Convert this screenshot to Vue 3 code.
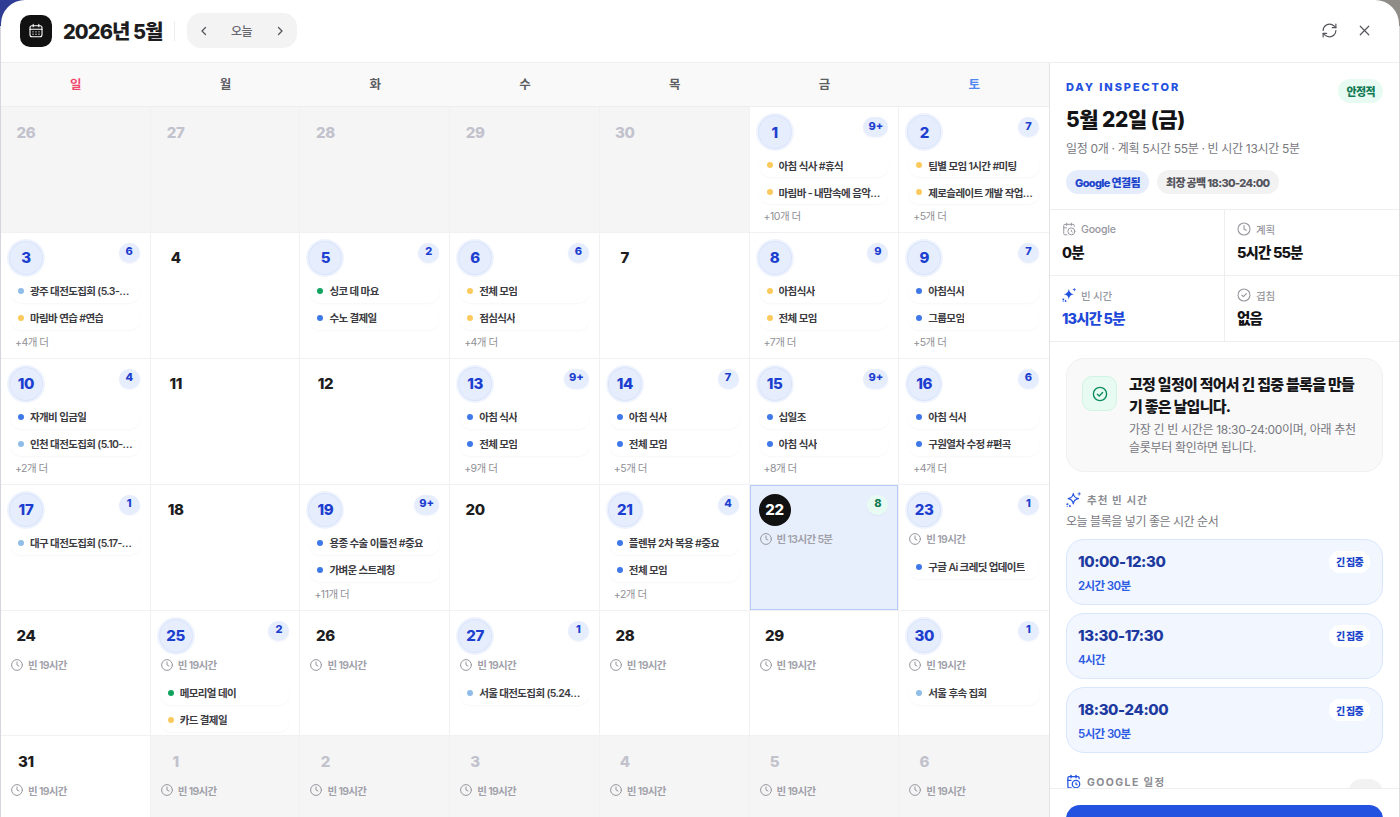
<script setup>
const Y = 'yellow', B = 'blue', L = 'light', G = 'green'
const e = (text, color) => ({ text, color })
const cells = [
  { d: 26, muted: 1 }, { d: 27, muted: 1 }, { d: 28, muted: 1 }, { d: 29, muted: 1 }, { d: 30, muted: 1 },
  { d: 1, c: '9+', ev: [e('아침 식사 #휴식', Y), e('마림바 - 내맘속에 음악회 연습', Y)], more: 10 },
  { d: 2, c: '7', ev: [e('팀별 모임 1시간 #미팅', Y), e('제로슬레이트 개발 작업 정리', Y)], more: 5 },
  { d: 3, c: '6', ev: [e('광주 대전도집회 (5.3-5.4)', L), e('마림바 연습 #연습', Y)], more: 4 },
  { d: 4 },
  { d: 5, c: '2', ev: [e('싱코 데 마요', G), e('수노 결제일', B)] },
  { d: 6, c: '6', ev: [e('전체 모임', Y), e('점심식사', Y)], more: 4 },
  { d: 7 },
  { d: 8, c: '9', ev: [e('아침식사', Y), e('전체 모임', Y)], more: 7 },
  { d: 9, c: '7', ev: [e('아침식사', B), e('그룹모임', B)], more: 5 },
  { d: 10, c: '4', ev: [e('자개비 입금일', B), e('인천 대전도집회 (5.10-5.11)', L)], more: 2 },
  { d: 11 }, { d: 12 },
  { d: 13, c: '9+', ev: [e('아침 식사', B), e('전체 모임', B)], more: 9 },
  { d: 14, c: '7', ev: [e('아침 식사', B), e('전체 모임', B)], more: 5 },
  { d: 15, c: '9+', ev: [e('십일조', B), e('아침 식사', B)], more: 8 },
  { d: 16, c: '6', ev: [e('아침 식사', B), e('구원열차 수정 #편곡', B)], more: 4 },
  { d: 17, c: '1', ev: [e('대구 대전도집회 (5.17-5.18)', L)] },
  { d: 18 },
  { d: 19, c: '9+', ev: [e('용종 수술 이틀전 #중요', B), e('가벼운 스트레칭', B)], more: 11 },
  { d: 20 },
  { d: 21, c: '4', ev: [e('플렌뷰 2차 복용 #중요', B), e('전체 모임', B)], more: 2 },
  { d: 22, c: '8', sel: 1, free: '빈 13시간 5분' },
  { d: 23, c: '1', free: '빈 19시간', ev: [e('구글 Ai 크레딧 업데이트', B)] },
  { d: 24, free: '빈 19시간' },
  { d: 25, c: '2', free: '빈 19시간', ev: [e('메모리얼 데이', G), e('카드 결제일', Y)] },
  { d: 26, free: '빈 19시간' },
  { d: 27, c: '1', free: '빈 19시간', ev: [e('서울 대전도집회 (5.24-5.25)', L)] },
  { d: 28, free: '빈 19시간' },
  { d: 29, free: '빈 19시간' },
  { d: 30, c: '1', free: '빈 19시간', ev: [e('서울 후속 집회', L)] },
  { d: 31, free: '빈 19시간' },
  ...[1, 2, 3, 4, 5, 6].map((d) => ({ d, muted: 1, free: '빈 19시간' }))
]
const weekdays = ['일', '월', '화', '수', '목', '금', '토']
const slots = [
  { t: '10:00-12:30', s: '2시간 30분' },
  { t: '13:30-17:30', s: '4시간' },
  { t: '18:30-24:00', s: '5시간 30분' }
]
</script>

<template>
  <div class="page">
    <div class="modal">
      <header class="top">
        <div class="logo">
          <svg width="16" height="16" viewBox="0 0 16 16" fill="none" stroke="#fff" stroke-width="1.1" stroke-linecap="round">
            <rect x="2" y="2.8" width="12" height="11" rx="2" />
            <path d="M2 6.2h12M5.2 1.4v2.4M10.8 1.4v2.4" />
            <path d="M5 8.8h.01M8 8.8h.01M11 8.8h.01M5 11.2h.01M8 11.2h.01M11 11.2h.01" stroke-width="1.3" />
          </svg>
        </div>
        <h1 class="title">2026년 5월</h1>
        <span class="divider"></span>
        <div class="nav">
          <svg width="14" height="14" viewBox="0 0 14 14" fill="none" stroke="#55555c" stroke-width="1.3" stroke-linecap="round" stroke-linejoin="round"><path d="M8.5 3.5 5 7l3.5 3.5" /></svg>
          <span class="today">오늘</span>
          <svg width="14" height="14" viewBox="0 0 14 14" fill="none" stroke="#55555c" stroke-width="1.3" stroke-linecap="round" stroke-linejoin="round"><path d="M5.5 3.5 9 7l-3.5 3.5" /></svg>
        </div>
        <div class="top-actions">
          <svg width="17" height="17" viewBox="0 0 24 24" fill="none" stroke="#55555c" stroke-width="1.7" stroke-linecap="round" stroke-linejoin="round">
            <path d="M3 12a9 9 0 0 1 9-9 9.75 9.75 0 0 1 6.74 2.74L21 8" /><path d="M21 3v5h-5" />
            <path d="M21 12a9 9 0 0 1-9 9 9.75 9.75 0 0 1-6.74-2.74L3 16" /><path d="M8 16H3v5" />
          </svg>
          <svg width="17" height="17" viewBox="0 0 24 24" fill="none" stroke="#55555c" stroke-width="1.7" stroke-linecap="round"><path d="M6 6l12 12M18 6 6 18" /></svg>
        </div>
      </header>

      <div class="body">
        <section class="calendar">
          <div class="weekdays">
            <div v-for="(w, i) in weekdays" :key="w" class="wd" :class="{ sun: i === 0, sat: i === 6 }">{{ w }}</div>
          </div>
          <div class="grid">
            <div v-for="(c, i) in cells" :key="i" class="cell" :class="{ muted: c.muted, sel: c.sel }">
              <div class="head">
                <span class="num" :class="{ has: c.c && !c.sel, black: c.sel }">{{ c.d }}</span>
                <span v-if="c.c" class="badge" :class="{ ok: c.sel }">{{ c.c }}</span>
              </div>
              <div v-if="c.free" class="free">
                <svg width="12" height="12" viewBox="0 0 12 12" fill="none" stroke="#97979f" stroke-width="1" stroke-linecap="round" stroke-linejoin="round">
                  <circle cx="6" cy="6" r="5.4" /><path d="M6 3v3l2 1" />
                </svg>
                <span>{{ c.free }}</span>
              </div>
              <div v-if="c.ev" class="events" :class="{ under: c.free }">
                <div v-for="x in c.ev" :key="x.text" class="ev">
                  <i class="dot" :class="x.color"></i>
                  <span class="ev-text">{{ x.text }}</span>
                </div>
              </div>
              <div v-if="c.more" class="more">+{{ c.more }}개 더</div>
            </div>
          </div>
        </section>

        <aside class="panel">
          <div class="panel-scroll">
            <div class="insp">
              <div class="insp-top">
                <span class="eyebrow">DAY INSPECTOR</span>
                <span class="stable">안정적</span>
              </div>
              <h2 class="insp-title">5월 22일 (금)</h2>
              <p class="insp-sub">일정 0개 · 계획 5시간 55분 · 빈 시간 13시간 5분</p>
              <div class="chips">
                <span class="chip blue-chip">Google 연결됨</span>
                <span class="chip grey-chip">최장 공백 18:30-24:00</span>
              </div>
            </div>

            <div class="stats">
              <div class="stat">
                <div class="stat-label">
                  <svg width="14" height="14" viewBox="0 0 24 24" fill="none" stroke="#97979f" stroke-width="1.7" stroke-linecap="round" stroke-linejoin="round">
                    <path d="M16 14v2.2l1.6 1" /><path d="M16 2v4" /><path d="M21 7.5V6a2 2 0 0 0-2-2H5a2 2 0 0 0-2 2v14a2 2 0 0 0 2 2h3.5" /><path d="M3 10h5" /><path d="M8 2v4" /><circle cx="16" cy="16" r="6" />
                  </svg>
                  Google
                </div>
                <div class="stat-val">0분</div>
              </div>
              <div class="stat">
                <div class="stat-label">
                  <svg width="14" height="14" viewBox="0 0 14 14" fill="none" stroke="#97979f" stroke-width="1.1" stroke-linecap="round" stroke-linejoin="round"><circle cx="7" cy="7" r="6" /><path d="M7 3.5V7l2.3 1.2" /></svg>
                  계획
                </div>
                <div class="stat-val">5시간 55분</div>
              </div>
              <div class="stat">
                <div class="stat-label">
                  <svg width="14" height="14" viewBox="0 0 14 14" fill="#2351e0">
                    <path d="M6.8 1c.5 3.2 1.9 4.7 5.2 5.2-3.3.5-4.7 2-5.2 5.2-.5-3.2-1.9-4.7-5.2-5.2 3.3-.5 4.7-2 5.2-5.2Z" />
                    <circle cx="1.3" cy="11.4" r="1" /><circle cx="3.6" cy="13" r=".9" /><circle cx="1.1" cy="13.6" r=".5" />
                    <path d="M11.9.2h.8v1.1h1.1v.8h-1.1v1.1h-.8V2.1h-1.1v-.8h1.1Z" />
                  </svg>
                  빈 시간
                </div>
                <div class="stat-val accent">13시간 5분</div>
              </div>
              <div class="stat">
                <div class="stat-label">
                  <svg width="14" height="14" viewBox="0 0 14 14" fill="none" stroke="#97979f" stroke-width="1.1" stroke-linecap="round" stroke-linejoin="round"><circle cx="7" cy="7" r="6" /><path d="m4.8 7.2 1.6 1.5 3-3" /></svg>
                  겹침
                </div>
                <div class="stat-val">없음</div>
              </div>
            </div>

            <div class="callout">
              <div class="callout-icon">
                <svg width="16" height="16" viewBox="0 0 16 16" fill="none" stroke="#0f8a5f" stroke-width="1.4" stroke-linecap="round" stroke-linejoin="round"><circle cx="8" cy="8" r="6.6" /><path d="m5.4 8.2 1.9 1.7 3.3-3.4" /></svg>
              </div>
              <div class="callout-text">
                <div class="callout-title">고정 일정이 적어서 긴 집중 블록을 만들기 좋은 날입니다.</div>
                <div class="callout-body">가장 긴 빈 시간은 18:30-24:00이며, 아래 추천 슬롯부터 확인하면 됩니다.</div>
              </div>
            </div>

            <div class="section">
              <div class="sec-head">
                <svg width="15" height="15" viewBox="0 0 14 14" fill="#2351e0">
                  <path d="M6.8 1.4c.5 3 1.8 4.3 4.8 4.8-3 .5-4.3 1.8-4.8 4.8-.5-3-1.8-4.3-4.8-4.8 3-.5 4.3-1.8 4.8-4.8Z" fill="none" stroke="#2351e0" stroke-width="1.1" stroke-linejoin="round" />
                  <circle cx="1.3" cy="11.4" r="1" /><circle cx="3.6" cy="13" r=".9" /><circle cx="1.1" cy="13.6" r=".5" />
                  <path d="M11.9.2h.8v1.1h1.1v.8h-1.1v1.1h-.8V2.1h-1.1v-.8h1.1Z" />
                </svg>
                <span class="sec-title">추천 빈 시간</span>
              </div>
              <p class="sec-sub">오늘 블록을 넣기 좋은 시간 순서</p>
              <div class="slots">
                <div v-for="s in slots" :key="s.t" class="slot">
                  <div class="slot-main">
                    <div class="slot-time">{{ s.t }}</div>
                    <div class="slot-len">{{ s.s }}</div>
                  </div>
                  <span class="slot-tag">긴 집중</span>
                </div>
              </div>
            </div>

            <div class="section gcal">
              <div class="sec-head">
                <svg width="15" height="15" viewBox="0 0 24 24" fill="none" stroke="#2351e0" stroke-width="2" stroke-linecap="round" stroke-linejoin="round">
                  <path d="M16 14v2.2l1.6 1" /><path d="M16 2v4" /><path d="M21 7.5V6a2 2 0 0 0-2-2H5a2 2 0 0 0-2 2v14a2 2 0 0 0 2 2h3.5" /><path d="M3 10h5" /><path d="M8 2v4" /><circle cx="16" cy="16" r="6" />
                </svg>
                <span class="sec-title wide">GOOGLE 일정</span>
                <span class="gcal-pill"></span>
              </div>
            </div>
          </div>
          <div class="footer">
            <div class="cta"></div>
          </div>
        </aside>
      </div>
    </div>
  </div>
</template>

<style>
html, body { margin: 0; height: 100%; overflow: hidden; }
</style>

<style scoped>
* { box-sizing: border-box; }
.page {
  width: 1400px;
  height: 817px;
  overflow: hidden;
  padding: 0 1px;
  font-family: Inter, "Noto Sans CJK KR", "Noto Sans", sans-serif;
  color: #1a1a1e;
  background:
    linear-gradient(to bottom, transparent 26px, #d3d5df 26px) left / 700px 100% no-repeat,
    linear-gradient(to bottom, transparent 26px, #dcdcdc 26px) right / 700px 100% no-repeat,
    linear-gradient(90deg, #2f3c93 50%, #8f8c88 50%);
}
.modal {
  height: 817px;
  background: #fff;
  border-radius: 24px 24px 0 0;
  overflow: hidden;
  display: flex;
  flex-direction: column;
}
.top {
  height: 63px;
  flex: none;
  display: flex;
  align-items: center;
  padding: 0 26px 1px 19px;
  border-bottom: 1px solid #eeeef0;
}
.logo {
  width: 32px;
  height: 32px;
  border-radius: 10px;
  background: #111;
  display: flex;
  align-items: center;
  justify-content: center;
}
.title { margin: 0 0 0 11px; font-size: 20px; font-weight: 800; letter-spacing: -0.9px; color: #1d1d20; }
.divider { width: 1px; height: 20px; background: #eeeef0; margin: 0 12px 0 11px; }
.nav {
  width: 110px;
  height: 35px;
  border-radius: 14px;
  background: #f3f3f4;
  display: flex;
  align-items: center;
  justify-content: space-between;
  padding: 0 10px;
}
.today { font-size: 12px; font-weight: 500; color: #66666d; letter-spacing: -0.4px; }
.top-actions { margin-left: auto; display: flex; align-items: center; gap: 18px; }

.body { flex: 1; display: flex; min-height: 0; }
.calendar { width: 1049px; flex: none; overflow: hidden; border-right: 1px solid #e4e4e7; }
.weekdays {
  display: grid;
  grid-template-columns: repeat(7, 1fr);
  height: 44px;
  background: #f9f9f9;
  border-bottom: 1px solid #eeeef0;
}
.wd {
  display: flex;
  align-items: center;
  justify-content: center;
  font-size: 12.5px;
  font-weight: 700;
  color: #5c5c63;
  padding-bottom: 2px;
}
.wd.sun { color: #f2466f; }
.wd.sat { color: #4f86f0; }
.grid {
  display: grid;
  grid-template-columns: repeat(7, 1fr);
  grid-auto-rows: 125.9px;
}
.cell {
  padding: 9px 10px 0 10px;
  border-right: 1px solid #f1f1f3;
  border-bottom: 1px solid #f1f1f3;
  overflow: hidden;
  background: #fff;
  min-width: 0;
}
.cell:nth-child(7n) { border-right: 0; }
.cell.muted { background: #f5f5f6; }
.cell.sel { background: #e8effc; box-shadow: inset 0 0 0 1px #b5cdf6; }
.head { display: flex; justify-content: space-between; align-items: flex-start; height: 32px; margin-left: -1px; }
.num {
  width: 32px;
  height: 32px;
  border-radius: 50%;
  display: flex;
  align-items: center;
  justify-content: center;
  font-size: 15px;
  font-weight: 800;
  letter-spacing: -0.3px;
  color: #1d1d20;
}
.muted .num { color: #c2c2cc; }
.num.has {
  color: #1d3fd0;
  background: #e6edfc;
  box-shadow: 0 0 0 1px #d9e4fb, 0 0 0 3px #eef3fd;
}
.num.black { background: #111; color: #fff; }
.badge {
  min-width: 21px;
  height: 20px;
  margin-top: 1px;
  padding: 0 5px 3px;
  border-radius: 10px;
  background: #e6edfc;
  color: #1d3fd0;
  font-size: 11px;
  font-weight: 800;
  display: flex;
  align-items: center;
  justify-content: center;
  box-shadow: 0 1px 2px rgba(30, 60, 200, 0.05);
}
.badge.ok { background: #e8fbf2; color: #0f7a54; }
.free {
  display: flex;
  align-items: center;
  gap: 5px;
  margin-top: 6px;
  height: 14px;
  font-size: 10.5px;
  font-weight: 600;
  color: #a0a0a8;
  white-space: nowrap;
  letter-spacing: -0.65px;
}
.events { margin-top: 5px; display: flex; flex-direction: column; gap: 3px; }
.events.under { margin-top: 9px; }
.ev {
  height: 24px;
  display: flex;
  align-items: center;
  gap: 6px;
  padding: 0 6px 0 7px;
  background: #fff;
  border-radius: 10px;
  box-shadow: 0 1px 2px rgba(0, 0, 0, 0.035);
  min-width: 0;
}
.dot { width: 6px; height: 6px; border-radius: 50%; flex: none; }
.dot.yellow { background: #fcc95c; }
.dot.blue { background: #3f78e8; }
.dot.light { background: #8fbde8; }
.dot.green { background: #0fa35f; }
.ev-text {
  font-size: 10.5px;
  font-weight: 600;
  color: #3b3b41;
  white-space: nowrap;
  overflow: hidden;
  text-overflow: ellipsis;
  letter-spacing: -0.62px;
}
.more { margin-top: 6px; padding-left: 4px; font-size: 10.5px; line-height: 14px; color: #8f8f96; letter-spacing: -0.5px; }

.panel { flex: 1; min-width: 0; display: flex; flex-direction: column; height: 754px; }
.panel-scroll { flex: 1; min-height: 0; overflow: hidden; }
.insp { padding: 16px; height: 147px; border-bottom: 1px solid #eeeef0; }
.insp-top { display: flex; justify-content: space-between; align-items: flex-start; height: 24px; }
.eyebrow { font-size: 11px; font-weight: 800; letter-spacing: 1.9px; color: #2351e0; line-height: 16px; }
.stable {
  height: 24px;
  padding: 0 8px;
  border-radius: 12px;
  background: #e8fbf2;
  color: #0f7a54;
  font-size: 11px;
  font-weight: 800;
  letter-spacing: -0.6px;
  display: flex;
  align-items: center;
}
.insp-title { margin: 2px 0 0; font-size: 21px; font-weight: 800; line-height: 30px; letter-spacing: -0.5px; color: #141416; }
.insp-sub { margin: 5px 0 0; font-size: 12px; line-height: 18px; color: #77777e; letter-spacing: -0.32px; }
.chips { display: flex; gap: 8px; margin-top: 12px; }
.chip {
  height: 24px;
  padding: 0 9px;
  border-radius: 12px;
  font-size: 11px;
  font-weight: 800;
  display: flex;
  align-items: center;
  letter-spacing: -0.65px;
}
.blue-chip { background: #e5ecfc; color: #1d45cc; }
.grey-chip { background: #f2f2f3; color: #55555c; }
.stats { display: grid; grid-template-columns: 175px 1fr; }
.stat { height: 66px; padding: 11px 12px 0; border-bottom: 1px solid #eeeef0; }
.stat:nth-child(odd) { border-right: 1px solid #eeeef0; }
.stat-label { display: flex; align-items: center; gap: 5px; height: 16px; font-size: 10.5px; font-weight: 500; color: #97979f; letter-spacing: -0.2px; }
.stat-val { margin-top: 5px; font-size: 14.5px; font-weight: 800; line-height: 22px; letter-spacing: -0.85px; color: #141416; }
.stat-val.accent { color: #1f49d8; }
.callout {
  margin: 16px 16px 0;
  height: 114px;
  padding: 17px 15px 0;
  display: flex;
  gap: 12px;
  background: #f9f9fa;
  border: 1px solid #f0f0f2;
  border-radius: 18px;
}
.callout-icon {
  width: 35px;
  height: 35px;
  flex: none;
  border-radius: 10px;
  background: #e8fbf2;
  border: 1px solid #cff4e2;
  display: flex;
  align-items: center;
  justify-content: center;
}
.callout-title { margin-top: -2px; font-size: 15px; font-weight: 800; line-height: 22px; letter-spacing: -0.7px; color: #17171a; }
.callout-body { font-size: 12px; line-height: 18px; color: #77777e; letter-spacing: -0.32px; margin-top: 3px; }
.section { padding: 0 16px; margin-top: 19px; }
.sec-head { display: flex; align-items: center; gap: 6px; height: 16px; }
.sec-title { font-size: 10.5px; font-weight: 700; letter-spacing: 1.1px; color: #8b8b92; }
.sec-title.wide { letter-spacing: 1.4px; }
.sec-sub { margin: 6px 0 0; font-size: 12px; line-height: 18px; color: #77777e; letter-spacing: -0.45px; }
.slots { display: flex; flex-direction: column; gap: 8px; margin-top: 7.5px; }
.slot {
  height: 66.33px;
  padding: 0 12px 0 11px;
  display: flex;
  align-items: center;
  justify-content: space-between;
  background: #f2f7ff;
  border: 1px solid #d9e6ff;
  border-radius: 18px;
}
.slot-main { padding-top: 2px; }
.slot-time { font-size: 15px; font-weight: 800; line-height: 22px; color: #1e3a9f; letter-spacing: -0.4px; }
.slot-len { font-size: 11.5px; font-weight: 600; line-height: 18px; margin-top: 4px; color: #2d5be3; letter-spacing: -0.6px; }
.slot-tag {
  height: 22px;
  width: 41px;
  border-radius: 11px;
  background: #fff;
  color: #1d45cc;
  font-size: 10px;
  font-weight: 800;
  display: flex;
  align-items: center;
  justify-content: center;
  letter-spacing: -0.7px;
  white-space: nowrap;
  margin-bottom: 20px;
}
.gcal { margin-top: 20px; }
.gcal-pill { margin-left: auto; align-self: flex-start; flex: none; width: 35px; height: 30px; margin-top: 6px; border-radius: 14px; background: #f2f2f3; }
.footer { flex: none; height: 29px; padding: 16px 16px 0; background: #fff; border-top: 1px solid #eeeef0; overflow: hidden; }
.cta { height: 48px; border-radius: 14px; background: #2351e0; }
</style>
